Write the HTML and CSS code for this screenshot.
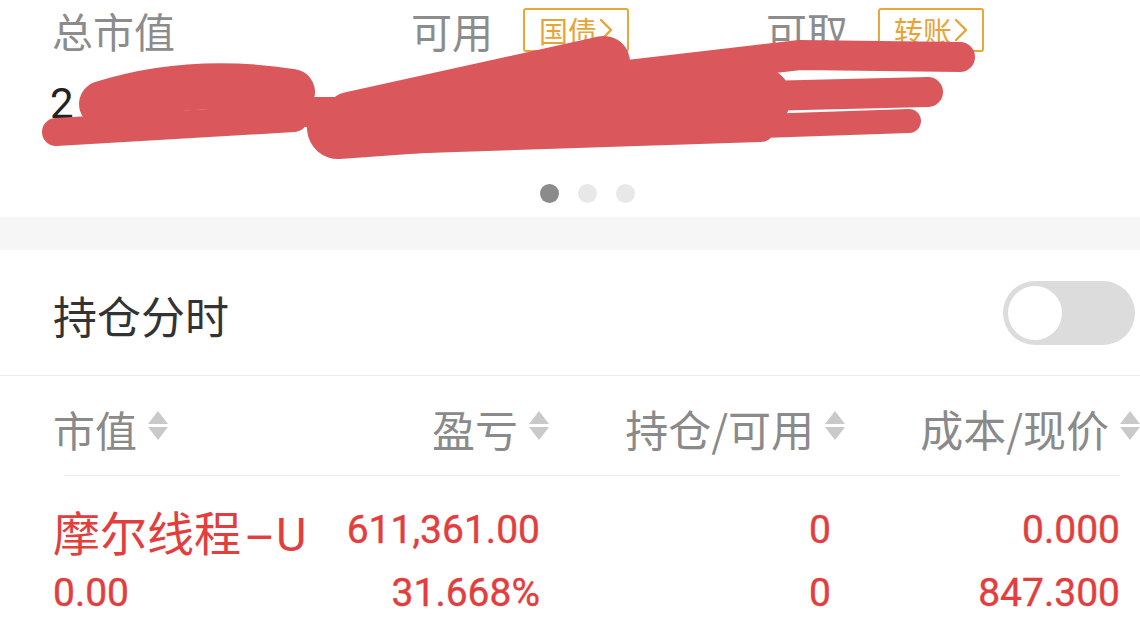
FILE: index.html
```html
<!DOCTYPE html>
<html lang="zh-CN">
<head>
    <meta charset="UTF-8">
    <meta name="viewport" content="width=device-width, initial-scale=1.0">
    <title>持仓</title>
    <link rel="stylesheet" href="styles.css">
</head>
<body>

    <main>
        <!-- asset summary -->
        <section class="assets">
            <div class="asset-labels">
                <div class="asset-item first">
                    <span class="asset-label">总市值</span>
                </div>
                <div class="asset-item second">
                    <span class="asset-label">可用</span>
                    <a class="badge">国债<svg class="chevron" width="14" height="24" viewBox="0 0 14 24"><polyline points="2,2 12,12 2,22" fill="none" stroke="#e8a335" stroke-width="2.4" stroke-linecap="round" stroke-linejoin="round"/></svg></a>
                </div>
                <div class="asset-item">
                    <span class="asset-label">可取</span>
                    <a class="badge">转账<svg class="chevron" width="14" height="24" viewBox="0 0 14 24"><polyline points="2,2 12,12 2,22" fill="none" stroke="#e8a335" stroke-width="2.4" stroke-linecap="round" stroke-linejoin="round"/></svg></a>
                </div>
            </div>

            <div class="asset-value">2</div>

            <div class="dots">
                <span class="dot active"></span>
                <span class="dot"></span>
                <span class="dot"></span>
            </div>

            <!-- hand drawn redaction over the amounts -->
            <svg class="redact" width="1140" height="217" viewBox="0 0 1140 217">
                <g fill="none" stroke="#da585c" stroke-linecap="round" stroke-linejoin="round">
                    <path d="M56 132 L294 118" stroke-width="28"/>
                    <path d="M102 104 Q190 76 292 92" stroke-width="46"/>
                    <path d="M290 112 L340 112" stroke-width="30"/>
                    <path d="M350 118 Q470 92 604 62" stroke-width="52"/>
                    <path d="M338 128 L760 98" stroke-width="62"/>
                    <path d="M334 140 L760 126" stroke-width="32"/>
                    <path d="M620 76 L800 55 L960 57" stroke-width="30"/>
                    <path d="M600 100 L928 92" stroke-width="30"/>
                    <path d="M700 128 L909 121" stroke-width="24"/>
                </g>
            </svg>
        </section>

        <div class="band"></div>

        <!-- holdings intraday switch -->
        <section class="toggle-row">
            <span class="toggle-title">持仓分时</span>
            <div class="switch">
                <span class="knob"></span>
            </div>
        </section>

        <!-- holdings table -->
        <section class="table">
            <div class="table-head">
                <div class="th left">市值<svg class="sort" width="20" height="30" viewBox="0 0 20 30"><polygon points="10,0 20,13 0,13" fill="#c9c9c9"/><polygon points="0,16 20,16 10,29" fill="#c9c9c9"/></svg></div>
                <div class="th">盈亏<svg class="sort" width="20" height="30" viewBox="0 0 20 30"><polygon points="10,0 20,13 0,13" fill="#c9c9c9"/><polygon points="0,16 20,16 10,29" fill="#c9c9c9"/></svg></div>
                <div class="th">持仓/可用<svg class="sort" width="20" height="30" viewBox="0 0 20 30"><polygon points="10,0 20,13 0,13" fill="#c9c9c9"/><polygon points="0,16 20,16 10,29" fill="#c9c9c9"/></svg></div>
                <div class="th">成本/现价<svg class="sort" width="20" height="30" viewBox="0 0 20 30"><polygon points="10,0 20,13 0,13" fill="#c9c9c9"/><polygon points="0,16 20,16 10,29" fill="#c9c9c9"/></svg></div>
            </div>

            <div class="table-row">
                <div class="td name">摩尔线程<span class="suffix"><span class="dash">-</span>U</span></div>
                <div class="td num c2">611,361.00</div>
                <div class="td num c3">0</div>
                <div class="td num c4">0.000</div>

                <div class="td num left">0.00</div>
                <div class="td num c2">31.668%</div>
                <div class="td num c3">0</div>
                <div class="td num c4">847.300</div>
            </div>
        </section>
    </main>

</body>
</html>
```

FILE: styles.css
```css
body {
    font-family: "Noto Sans CJK SC", "Noto Sans", sans-serif;
    margin: 0;
    padding: 0;
    background-color: #fff;
    color: #333;
    overflow: hidden;
}

main {
    width: 1140px;
}

/* asset summary */
.assets {
    position: relative;
    height: 217px;
}

.asset-labels {
    display: flex;
    padding: 8px 0 0 52px;
}

.asset-item {
    display: flex;
    align-items: center;
    height: 44px;
}

.asset-item.first {
    width: 359px;
}

.asset-item.second {
    width: 355px;
}

.asset-label {
    font-size: 41px;
    line-height: 44px;
    color: #8c8c8c;
}

.badge {
    display: flex;
    align-items: center;
    box-sizing: border-box;
    width: 106px;
    height: 44px;
    margin-left: 30px;
    padding-left: 14px;
    border: 2px solid #e9a73a;
    border-radius: 3px;
    font-size: 29px;
    color: #e8a335;
}

.chevron {
    margin-left: 2px;
}

.asset-value {
    margin-top: 31px;
    padding-left: 50px;
    font-family: Roboto, "Liberation Sans", sans-serif;
    font-size: 42px;
    line-height: 42px;
    color: #222;
}

.dots {
    display: flex;
    gap: 19px;
    margin-top: 59px;
    padding-left: 540px;
}

.dot {
    width: 19px;
    height: 19px;
    border-radius: 50%;
    background-color: #e8e8e8;
}

.dot.active {
    background-color: #8b8b8b;
}

.redact {
    position: absolute;
    top: 0;
    left: 0;
    pointer-events: none;
}

.band {
    height: 33px;
    background-color: #f6f6f6;
}

/* switch row */
.toggle-row {
    display: flex;
    justify-content: space-between;
    align-items: center;
    height: 125px;
    padding: 0 5px 0 53px;
    border-bottom: 1px solid #ededed;
}

.toggle-title {
    font-size: 44px;
    color: #333;
    padding-top: 4px;
}

.switch {
    box-sizing: border-box;
    width: 132px;
    height: 64px;
    padding: 5px;
    border-radius: 32px;
    background-color: #dcdcdc;
}

.knob {
    display: block;
    width: 54px;
    height: 54px;
    border-radius: 50%;
    background-color: #fff;
}

/* table */
.table-head,
.table-row {
    display: grid;
    grid-template-columns: 250px 246px 296px 295px;
    padding-left: 53px;
}

.table-head {
    height: 100px;
    align-items: center;
    box-sizing: border-box;
    padding-top: 4px;
    position: relative;
}

.table-head::after {
    content: "";
    position: absolute;
    left: 64px;
    right: 20px;
    bottom: 0;
    border-bottom: 1px solid #ededed;
}

.th {
    display: flex;
    align-items: center;
    justify-content: flex-end;
    font-size: 43px;
    color: #8a8a8a;
    white-space: nowrap;
}

.th.left {
    justify-content: flex-start;
    font-size: 42px;
}

.sort {
    margin-left: 11px;
    margin-top: -4px;
}

.table-row {
    padding-top: 25px;
    color: #e23e3e;
}

.td {
    line-height: 59px;
    white-space: nowrap;
}

.name {
    font-size: 47px;
}

.suffix {
    font-family: Roboto, "Liberation Sans", sans-serif;
}

.dash {
    display: inline-block;
    margin: 0 10px 0 12px;
    transform: scaleX(2.1);
}

.num {
    font-family: Roboto, "Liberation Sans", sans-serif;
    font-size: 39px;
    text-align: right;
    -webkit-text-stroke: 0.4px #e23e3e;
}

.num.left {
    text-align: left;
}

.c2 {
    padding-right: 9px;
}

.c3 {
    padding-right: 14px;
}

.c4 {
    padding-right: 20px;
}
```
